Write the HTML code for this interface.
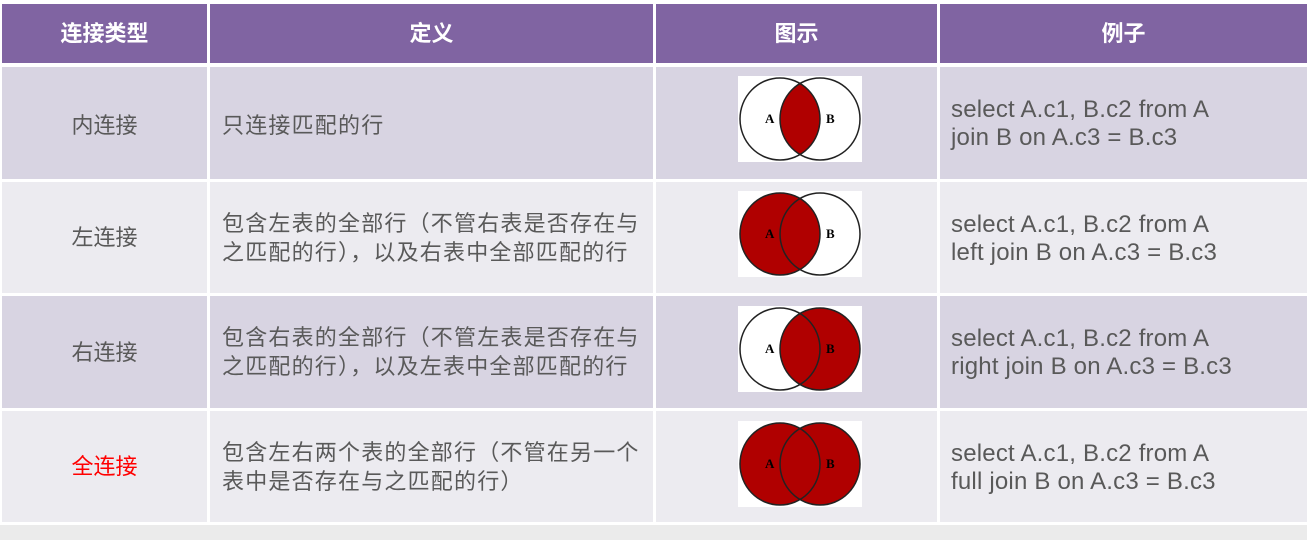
<!DOCTYPE html>
<html><head><meta charset="utf-8"><style>
body{margin:0;width:1307px;height:540px;background:#ebebeb;position:relative;overflow:hidden;font-family:"Liberation Sans","Noto Sans CJK SC",sans-serif;}
.c{position:absolute;box-sizing:border-box;display:flex;align-items:center;color:#595959;font-size:22px;line-height:29px}
.h{background:#8064a2;color:#fff;font-weight:bold;justify-content:center;font-size:22px}
.d{background:#d8d4e2}.l{background:#ecebf0}
.ctr{justify-content:center}
.p{padding-left:12px;letter-spacing:1.2px}
.e{font-size:24px;line-height:28px;padding-left:11px;padding-top:2px;letter-spacing:0.2px}
svg{position:absolute}
</style></head><body>
<div style="position:absolute;left:0;top:0;width:1307px;height:525px;background:#fff"></div>
<div class="c h" style="left:2px;top:4px;width:205px;height:59px">连接类型</div>
<div class="c h" style="left:210px;top:4px;width:443px;height:59px">定义</div>
<div class="c h" style="left:656px;top:4px;width:281px;height:59px">图示</div>
<div class="c h" style="left:940px;top:4px;width:367px;height:59px">例子</div>

<div class="c d ctr" style="left:2px;top:67px;width:205px;height:112px;padding-top:4px">内连接</div>
<div class="c d p" style="left:210px;top:67px;width:443px;height:112px;padding-top:4px">只连接匹配的行</div>
<div class="c d" style="left:656px;top:67px;width:281px;height:112px"></div>
<div class="c d e" style="left:940px;top:67px;width:367px;height:112px">select A.c1, B.c2 from A<br>join B on A.c3 = B.c3</div>

<div class="c l ctr" style="left:2px;top:182px;width:205px;height:111px">左连接</div>
<div class="c l p" style="left:210px;top:182px;width:443px;height:111px">包含左表的全部行（不管右表是否存在与<br>之匹配的行），以及右表中全部匹配的行</div>
<div class="c l" style="left:656px;top:182px;width:281px;height:111px"></div>
<div class="c l e" style="left:940px;top:182px;width:367px;height:111px">select A.c1, B.c2 from A<br>left join B on A.c3 = B.c3</div>

<div class="c d ctr" style="left:2px;top:296px;width:205px;height:112px">右连接</div>
<div class="c d p" style="left:210px;top:296px;width:443px;height:112px">包含右表的全部行（不管左表是否存在与<br>之匹配的行），以及左表中全部匹配的行</div>
<div class="c d" style="left:656px;top:296px;width:281px;height:112px"></div>
<div class="c d e" style="left:940px;top:296px;width:367px;height:112px">select A.c1, B.c2 from A<br>right join B on A.c3 = B.c3</div>

<div class="c l ctr" style="left:2px;top:411px;width:205px;height:111px;color:#f00">全连接</div>
<div class="c l p" style="left:210px;top:411px;width:443px;height:111px">包含左右两个表的全部行（不管在另一个<br>表中是否存在与之匹配的行）</div>
<div class="c l" style="left:656px;top:411px;width:281px;height:111px"></div>
<div class="c l e" style="left:940px;top:411px;width:367px;height:111px">select A.c1, B.c2 from A<br>full join B on A.c3 = B.c3</div>

<svg width="124" height="86" style="left:738px;top:76px" viewBox="0 0 124 86">
<defs><clipPath id="a1"><ellipse cx="42" cy="43" rx="40" ry="41"/></clipPath></defs>
<rect width="124" height="86" fill="#fff"/>
<ellipse cx="82" cy="43" rx="40" ry="41" fill="#b00000" clip-path="url(#a1)"/>
<ellipse cx="42" cy="43" rx="40" ry="41" fill="none" stroke="#222" stroke-width="1.5"/>
<ellipse cx="82" cy="43" rx="40" ry="41" fill="none" stroke="#222" stroke-width="1.5"/>
<text x="27" y="47" font-size="13" font-weight="bold" font-family="Liberation Serif">A</text><text x="88" y="47" font-size="13" font-weight="bold" font-family="Liberation Serif">B</text></svg>

<svg width="124" height="86" style="left:738px;top:191px" viewBox="0 0 124 86">
<rect width="124" height="86" fill="#fff"/>
<ellipse cx="42" cy="43" rx="40" ry="41" fill="#b00000"/>
<ellipse cx="42" cy="43" rx="40" ry="41" fill="none" stroke="#222" stroke-width="1.5"/>
<ellipse cx="82" cy="43" rx="40" ry="41" fill="none" stroke="#222" stroke-width="1.5"/>
<text x="27" y="47" font-size="13" font-weight="bold" font-family="Liberation Serif">A</text><text x="88" y="47" font-size="13" font-weight="bold" font-family="Liberation Serif">B</text></svg>

<svg width="124" height="86" style="left:738px;top:306px" viewBox="0 0 124 86">
<rect width="124" height="86" fill="#fff"/>
<ellipse cx="82" cy="43" rx="40" ry="41" fill="#b00000"/>
<ellipse cx="42" cy="43" rx="40" ry="41" fill="none" stroke="#222" stroke-width="1.5"/>
<ellipse cx="82" cy="43" rx="40" ry="41" fill="none" stroke="#222" stroke-width="1.5"/>
<text x="27" y="47" font-size="13" font-weight="bold" font-family="Liberation Serif">A</text><text x="88" y="47" font-size="13" font-weight="bold" font-family="Liberation Serif">B</text></svg>

<svg width="124" height="86" style="left:738px;top:421px" viewBox="0 0 124 86">
<rect width="124" height="86" fill="#fff"/>
<ellipse cx="42" cy="43" rx="40" ry="41" fill="#b00000"/>
<ellipse cx="82" cy="43" rx="40" ry="41" fill="#b00000"/>
<ellipse cx="42" cy="43" rx="40" ry="41" fill="none" stroke="#222" stroke-width="1.5"/>
<ellipse cx="82" cy="43" rx="40" ry="41" fill="none" stroke="#222" stroke-width="1.5"/>
<text x="27" y="47" font-size="13" font-weight="bold" font-family="Liberation Serif">A</text><text x="88" y="47" font-size="13" font-weight="bold" font-family="Liberation Serif">B</text></svg>
</body></html>
